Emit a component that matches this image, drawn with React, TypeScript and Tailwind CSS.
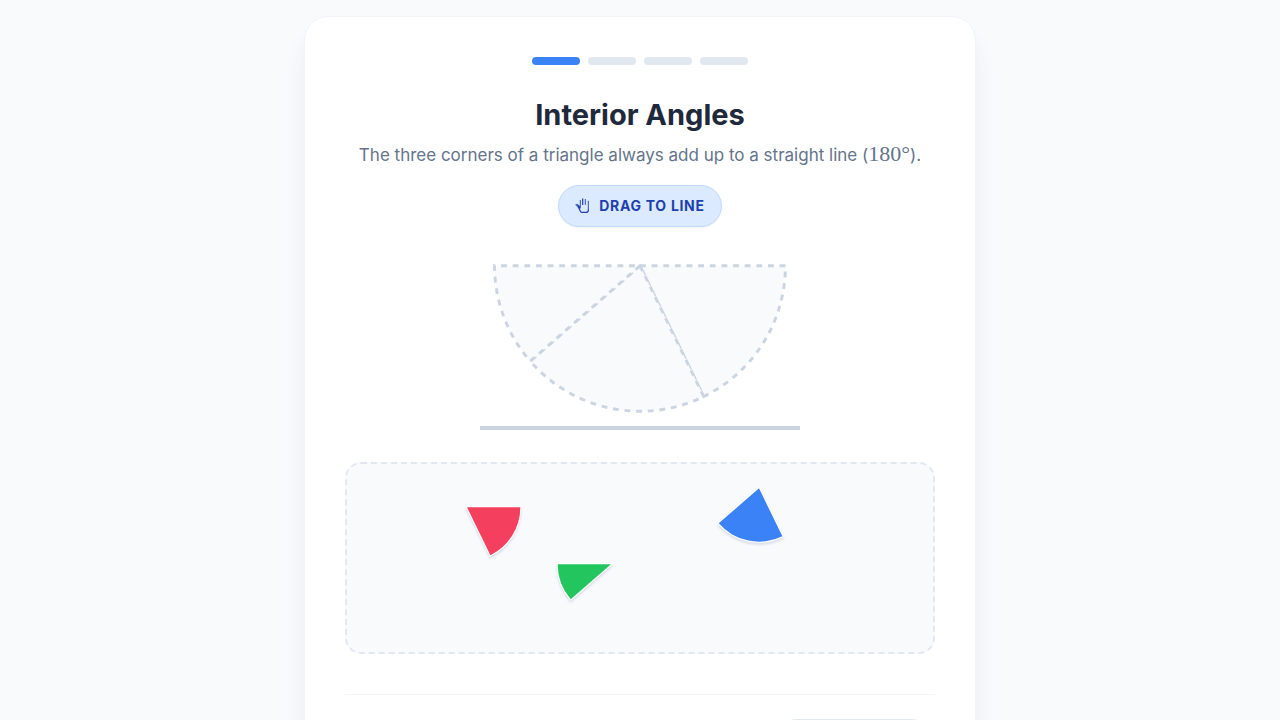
import React, { useState } from "react";

const RADIUS = 50;

const sectors = [
  { id: "red", from: 0, to: 64, fill: "#f43f5e", position: "left-[56px] top-[38px]" },
  { id: "blue", from: 64, to: 139, fill: "#3b82f6", position: "left-[348px] top-[19px]" },
  { id: "green", from: 139, to: 180, fill: "#22c55e", position: "left-[200px] top-[95px]" },
];

const point = (deg: number) => {
  const rad = (deg * Math.PI) / 180;
  return `${(RADIUS * Math.cos(rad)).toFixed(2)} ${(RADIUS * Math.sin(rad)).toFixed(2)}`;
};

const sectorPath = (from: number, to: number) =>
  `M 0 0 L ${point(from)} A ${RADIUS} ${RADIUS} 0 0 1 ${point(to)} Z`;

const HandIcon = () => (
  <svg viewBox="0 0 16 16" className="size-4" fill="none" stroke="currentColor" strokeLinecap="round" strokeLinejoin="round">
    <path d="M5.3 9V2.4M10.3 6.5V1.4M13.3 12V3.2" strokeWidth="0.9" />
    <path d="M7.7 6.5V0.8" strokeWidth="1.2" />
    <path d="M3.6 9.6L5.4 13.2C5.8 14 6.4 14.4 7.2 14.4H11.2C12.5 14.4 13.3 13.6 13.3 12.2" strokeWidth="1.2" />
    <path d="M1 6.6L2.6 6.4L5.2 8.8V10.4L3.8 10Z" fill="currentColor" strokeWidth="0.6" />
  </svg>
);

const App = () => {
  const [step] = useState(0);

  return (
    <div className="min-h-screen bg-[#f8fafc] p-4 font-['Inter','Liberation_Sans',sans-serif]">
      <main className="mx-auto max-w-2xl rounded-3xl border border-[#f1f5f9] bg-white p-10 shadow-xl shadow-[#e2e8f0]">
        <div className="mb-8 flex justify-center gap-2">
          {[0, 1, 2, 3].map((i) => (
            <div
              key={i}
              className={`h-2 w-12 rounded-full ${i === step ? "bg-[#3b82f6]" : "bg-[#e2e8f0]"}`}
            />
          ))}
        </div>

        <div className="flex flex-col items-center text-center">
          <h1 className="mb-2 text-[29px] leading-9 font-bold text-[#1e293b]">Interior Angles</h1>
          <p className="mb-4 text-[17px] leading-7 text-[#64748b]">
            The three corners of a triangle always add up to a straight line (
            <span className="font-['Liberation_Serif',serif] text-[22px] leading-none">180°</span>).
          </p>
          <div className="mb-6 flex items-center gap-2 rounded-full border border-[#bfdbfe] bg-[#dbeafe] px-4 py-2.5 text-sm font-bold uppercase tracking-wider text-[#1e40af] shadow-xs">
            <HandIcon />
            Drag to line
          </div>
        </div>

        <div className="mx-auto mb-8 w-80 border-b-4 border-[#cbd5e1]">
          <svg viewBox="-55 -5 110 60" className="block h-[175px] w-full">
            {sectors.map((s) => (
              <path
                key={s.id}
                d={sectorPath(s.from, s.to)}
                fill="#f8fafc"
                stroke="#cbd5e1"
                strokeWidth="1"
                strokeDasharray="2 2"
              />
            ))}
          </svg>
        </div>

        <div className="relative mb-10 h-48 rounded-2xl border-2 border-dashed border-[#e2e8f0] bg-[#f8fafc]">
          {sectors.map((s) => (
            <svg
              key={s.id}
              viewBox="-60 -5 120 60"
              className={`absolute h-16 w-32 cursor-grab drop-shadow-[0_2px_1px_rgb(100_116_139/0.2)] ${s.position}`}
            >
              <path
                d={sectorPath(s.from, s.to)}
                fill={s.fill}
                stroke="white"
                strokeWidth="2"
                paintOrder="stroke"
              />
            </svg>
          ))}
        </div>

        <div className="flex justify-end border-t border-[#f1f5f9] pt-6">
          <button type="button" disabled className="h-12 w-[162px] rounded-full bg-[#e2e8f0]" />
        </div>
      </main>
    </div>
  );
};

export default App;
